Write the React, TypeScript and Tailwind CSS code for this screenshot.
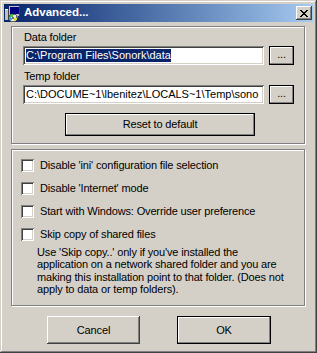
import React from "react";

const raised =
  "bg-[#d4d0c8] shadow-[inset_-1px_-1px_#404040,inset_1px_1px_#ffffff,inset_-2px_-2px_#808080,inset_2px_2px_#d4d0c8]";
const defaultBtn =
  "bg-[#d4d0c8] border border-black shadow-[inset_-1px_-1px_#808080,inset_1px_1px_#ffffff]";
const sunken =
  "bg-white shadow-[inset_1px_1px_#808080,inset_-1px_-1px_#ffffff,inset_2px_2px_#404040,inset_-2px_-2px_#d4d0c8]";
const etched =
  "border border-[#808080] shadow-[inset_1px_1px_#ffffff,1px_1px_#ffffff]";

const AppIcon = () => (
  <svg width="16" height="16" viewBox="0 0 16 16" shapeRendering="crispEdges">
    {/* tower */}
    <rect x="0" y="3" width="4" height="11" fill="#c0c0c0" />
    <rect x="0" y="3" width="4" height="1" fill="#ffffff" />
    <rect x="3" y="3" width="1" height="11" fill="#404040" />
    {/* monitor */}
    <rect x="4" y="0" width="11" height="10" fill="#c0c0c0" />
    <rect x="5" y="1" width="9" height="7" fill="#000080" />
    <rect x="14" y="0" width="1" height="10" fill="#404040" />
    <rect x="6" y="10" width="7" height="2" fill="#808080" />
    {/* disc */}
    <circle cx="8" cy="12" r="4" fill="#e8e8e8" stroke="#404040" strokeWidth="0.8" />
    <path d="M8 12 L4.5 10 A4 4 0 0 1 8 8 Z" fill="#40c040" />
    <path d="M8 12 L12 12 A4 4 0 0 1 10 15.5 Z" fill="#e0e040" />
    <path d="M8 12 L5 15 A4 4 0 0 1 4.2 11 Z" fill="#40a0e0" />
    <circle cx="8" cy="12" r="1" fill="#ffffff" stroke="#404040" strokeWidth="0.5" />
  </svg>
);

const CloseGlyph = () => (
  <svg width="8" height="7" viewBox="0 0 8 7" shapeRendering="crispEdges">
    <path
      d="M0 0h2v1h-2zM6 0h2v1h-2zM1 1h2v1h-2zM5 1h2v1h-2zM2 2h4v1h-4zM3 3h2v1h-2zM2 4h4v1h-4zM1 5h2v1h-2zM5 5h2v1h-2zM0 6h2v1h-2zM6 6h2v1h-2z"
      fill="#000"
    />
  </svg>
);

const Checkbox = ({ label }: { label: string }) => (
  <div className="flex items-center h-[13px] gap-[6px]">
    <div className={`${sunken} w-[13px] h-[13px] shrink-0`} />
    <span className="leading-[13px] whitespace-nowrap">{label}</span>
  </div>
);

const FolderRow = ({ value, selected }: { value: string; selected?: boolean }) => (
  <div className="flex items-center mt-[2px] gap-[5px]">
    <div className={`${sunken} w-[241px] h-[19px] overflow-hidden flex items-center pl-[3px] pr-[2px]`}>
      <span
        className={`whitespace-nowrap leading-[13px] tracking-normal ${
          selected ? "bg-[#0a246a] text-white" : "text-black"
        }`}
      >
        {value}
      </span>
    </div>
    <button className={`${defaultBtn} w-[25px] h-[19px] flex items-center justify-center leading-none pb-[2px]`}>
      ...
    </button>
  </div>
);

export default function App() {
  return (
    <div
      className="w-[317px] h-[353px] bg-[#d4d0c8] p-[4px] flex flex-col text-[11px] tracking-[-0.15px] text-black shadow-[inset_-1px_-1px_#404040,inset_1px_1px_#d4d0c8,inset_-2px_-2px_#808080,inset_2px_2px_#ffffff]"
      style={{ fontFamily: '"Liberation Sans", Arial, sans-serif' }}
    >
      {/* Title bar */}
      <div className="h-[18px] flex items-center bg-linear-to-r from-[#0a246a] to-[#a6caf0]">
        <div className="ml-[1px] mt-[1px]">
          <AppIcon />
        </div>
        <span className="ml-[3px] text-white font-bold text-[11.5px] tracking-normal leading-none">
          Advanced...
        </span>
        <div className="flex-1" />
        <div className={`${raised} w-[16px] h-[14px] mr-[1px] flex items-center justify-center`}>
          <CloseGlyph />
        </div>
      </div>

      {/* Folder group */}
      <div className={`${etched} mt-[4px] ml-[7px] w-[294px] h-[118px] pt-[4px] pl-[11px] flex flex-col`}>
        <div className="leading-[13px] pl-[1px]">Data folder</div>
        <FolderRow value="C:\Program Files\Sonork\data" selected />
        <div className="leading-[13px] pl-[1px] mt-[5px]">Temp folder</div>
        <FolderRow value="C:\DOCUME~1\lbenitez\LOCALS~1\Temp\sono" />
        <button className={`${defaultBtn} mt-[9px] ml-[42px] w-[190px] h-[23px] leading-none`}>
          Reset to default
        </button>
      </div>

      {/* Options group */}
      <div className={`${etched} mt-[5px] ml-[7px] w-[294px] h-[157px] pt-[9px] pl-[9px] flex flex-col`}>
        <div className="flex flex-col gap-[10px]">
          <Checkbox label="Disable 'ini' configuration file selection" />
          <Checkbox label="Disable 'Internet' mode" />
          <Checkbox label="Start with Windows: Override user preference" />
          <Checkbox label="Skip copy of shared files" />
        </div>
        <p className="mt-[5px] pl-[16px] leading-[12.4px] whitespace-nowrap">
          Use 'Skip copy..' only if you've installed the
          <br />
          application on a network shared folder and you are
          <br />
          making this installation point to that folder. (Does not
          <br />
          apply to data or temp folders).
        </p>
      </div>

      {/* Buttons */}
      <div className="flex mt-[10px] ml-[43px] gap-[37px]">
        <button className={`${raised} w-[93px] h-[28px] leading-none`}>Cancel</button>
        <button className={`${defaultBtn} w-[94px] h-[28px] leading-none`}>OK</button>
      </div>
    </div>
  );
}
